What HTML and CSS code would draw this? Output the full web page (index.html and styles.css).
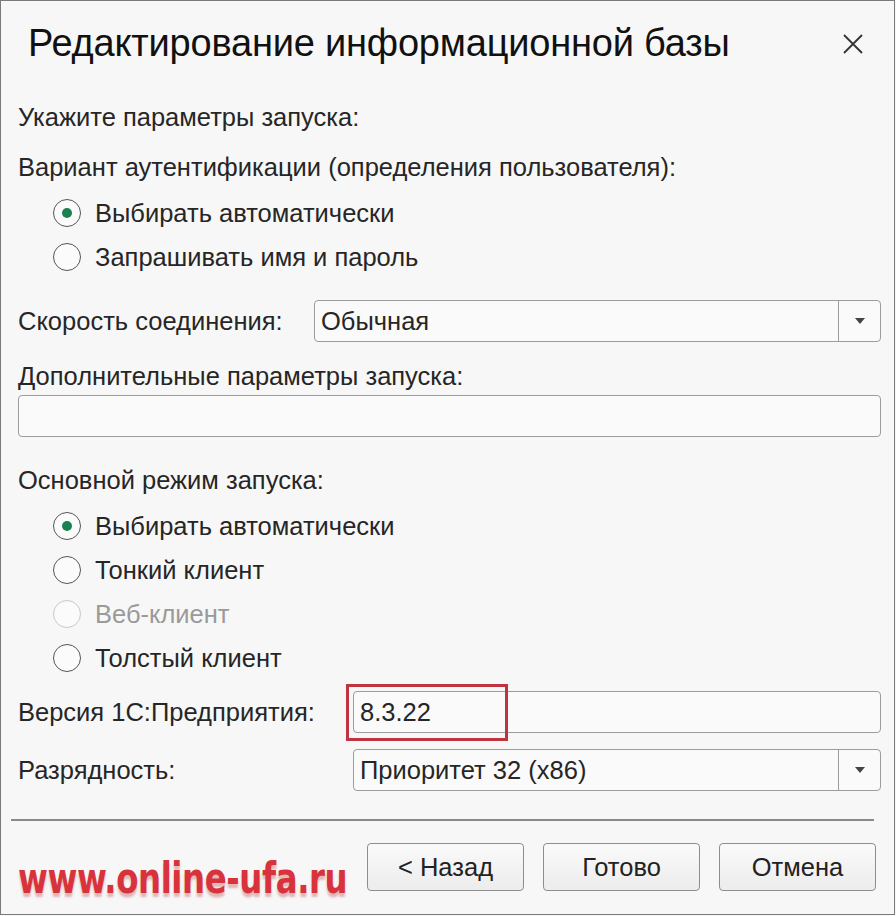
FILE: index.html
```html
<!DOCTYPE html>
<html lang="ru">
<head>
<meta charset="utf-8">
<title>Редактирование информационной базы</title>
<link rel="stylesheet" href="styles.css">
</head>
<body>
<div class="window">
  <div class="titlebar">
    <h1 class="title">Редактирование информационной базы</h1>
    <svg class="close" width="22" height="22" viewBox="0 0 22 22"><path d="M2 2 L20 20 M20 2 L2 20" stroke="#333" stroke-width="1.8" fill="none"/></svg>
  </div>
  <div class="content">
    <div class="label l-head">Укажите параметры запуска:</div>
    <div class="label l-auth">Вариант аутентификации (определения пользователя):</div>
    <div class="radios r-auth">
      <div class="radio checked"><span class="circle"></span><span>Выбирать автоматически</span></div>
      <div class="radio"><span class="circle"></span><span>Запрашивать имя и пароль</span></div>
    </div>
    <div class="row r-speed">
      <span class="label">Скорость соединения:</span>
      <div class="field combo c-speed"><span class="val">Обычная</span><span class="btn"><span class="tri"></span></span></div>
    </div>
    <div class="label l-extra">Дополнительные параметры запуска:</div>
    <div class="field f-extra"></div>
    <div class="label l-mode">Основной режим запуска:</div>
    <div class="radios r-mode">
      <div class="radio checked"><span class="circle"></span><span>Выбирать автоматически</span></div>
      <div class="radio"><span class="circle"></span><span>Тонкий клиент</span></div>
      <div class="radio disabled"><span class="circle"></span><span>Веб-клиент</span></div>
      <div class="radio"><span class="circle"></span><span>Толстый клиент</span></div>
    </div>
    <div class="row r-ver">
      <span class="label">Версия 1С:Предприятия:</span>
      <div class="field f-ver"><span class="val">8.3.22</span><span class="mark"></span></div>
    </div>
    <div class="row r-bits">
      <span class="label">Разрядность:</span>
      <div class="field combo c-bits"><span class="val">Приоритет 32 (x86)</span><span class="btn"><span class="tri"></span></span></div>
    </div>
    <div class="sep"></div>
    <div class="footer">
      <span class="watermark">www.online-ufa.ru</span>
      <div class="buttons">
        <button class="button">&lt; Назад</button>
        <button class="button">Готово</button>
        <button class="button">Отмена</button>
      </div>
    </div>
  </div>
</div>
</body>
</html>
```
FILE: styles.css
```css
html, body {
  margin: 0;
  padding: 0;
  background: #f7f7f7;
}
body {
  font-family: "Liberation Sans", Arial, sans-serif;
  color: #262626;
}
.window {
  box-sizing: border-box;
  width: 895px;
  height: 915px;
  border: 1px solid #7a7a7a;
  background: #f7f7f7;
  display: flex;
  flex-direction: column;
  overflow: hidden;
}
.titlebar {
  flex-shrink: 0;
  display: flex;
  align-items: center;
  justify-content: space-between;
  height: 88px;
  padding: 0 30px 0 27px;
}
.title {
  margin: -3px 0 0 0;
  font-weight: normal;
  font-size: 38px;
  color: #111;
  letter-spacing: -0.2px;
}
.close { display: block; margin-top: -2px; }
.content {
  flex-shrink: 0;
  padding: 0 13px 0 17px;
  display: flex;
  flex-direction: column;
}
.label {
  font-size: 25.5px;
  line-height: 28px;
  white-space: nowrap;
}
.l-head { margin-top: 14px; }
.l-auth { margin-top: 22px; }
.radios { display: flex; flex-direction: column; padding-left: 35px; }
.r-auth { margin-top: 10px; }
.radio {
  display: flex;
  align-items: center;
  height: 44px;
  font-size: 25.5px;
}
.circle {
  box-sizing: border-box;
  width: 28px;
  height: 28px;
  border-radius: 50%;
  border: 1.5px solid #555;
  background: #fbfbfb;
  margin-right: 14px;
  display: flex;
  align-items: center;
  justify-content: center;
}
.radio.checked .circle::after {
  content: "";
  width: 10px;
  height: 10px;
  border-radius: 50%;
  background: #1a8150;
}
.radio.disabled { color: #9a9a9a; }
.radio.disabled .circle { border-color: #c8c8c8; }
.row {
  display: flex;
  align-items: center;
  justify-content: space-between;
}
.r-speed { margin-top: 21px; }
.field {
  box-sizing: border-box;
  height: 42px;
  border: 1.5px solid #9c9c9c;
  border-radius: 4px;
  background: #fafafa;
  display: flex;
  align-items: center;
  font-size: 25.5px;
  position: relative;
}
.field .val { padding-left: 6px; flex: 1; }
.combo .btn {
  align-self: stretch;
  width: 41px;
  border-left: 1.5px solid #9c9c9c;
  display: flex;
  align-items: center;
  justify-content: center;
}
.tri {
  width: 0; height: 0;
  border-left: 5px solid transparent;
  border-right: 5px solid transparent;
  border-top: 6px solid #444;
}
.c-speed { width: 567px; }
.l-extra { margin-top: 20px; }
.f-extra { margin-top: 5px; width: 100%; }
.l-mode { margin-top: 29px; }
.r-mode { margin-top: 10px; }
.r-ver { margin-top: 11px; }
.f-ver { width: 528px; }
.mark {
  position: absolute;
  left: -8px;
  top: -8px;
  width: 162px;
  height: 57px;
  box-sizing: border-box;
  border: 3px solid #c0343f;
}
.r-bits { margin-top: 16px; }
.c-bits { width: 528px; }
.sep {
  margin: 28px 7px 0 -7px;
  height: 2px;
  background: #8a8a8a;
}
.footer {
  display: flex;
  align-items: flex-start;
  justify-content: space-between;
  margin-top: 22px;
}
.watermark {
  display: inline-block;
  white-space: nowrap;
  font-family: "DejaVu Sans Condensed", "DejaVu Sans", sans-serif;
  font-weight: bold;
  font-size: 36px;
  line-height: 40px;
  letter-spacing: -0.4px;
  color: #d8333c;
  text-shadow: 0 3px 2px rgba(180,60,60,0.35);
  margin-top: 16px;
  margin-left: 0;
  transform: scaleY(1.2);
  transform-origin: left center;
}
.buttons { display: flex; gap: 19px; margin-right: 5px; }
.button {
  box-sizing: border-box;
  width: 157px;
  height: 48px;
  border: 1.5px solid #8e8e8e;
  border-radius: 4px;
  background: linear-gradient(#fafafa, #ececec);
  font-family: "Liberation Sans", Arial, sans-serif;
  font-size: 25.5px;
  color: #222;
  padding: 0;
}
```
